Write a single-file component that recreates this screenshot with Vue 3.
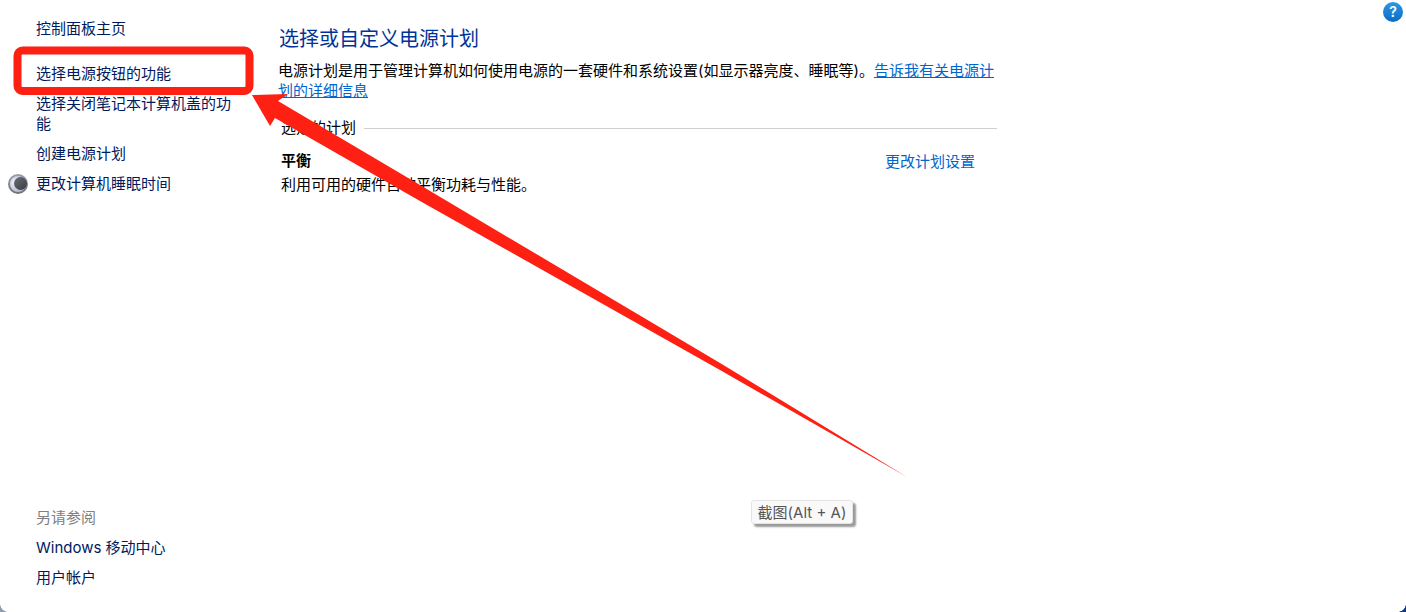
<template>
  <div class="window">
    <aside class="sidebar">
      <nav class="tasks">
        <a class="task home">控制面板主页</a>
        <a v-for="task in tasks" :key="task" class="task">{{ task }}</a>
        <a class="task with-icon">
          <svg class="moon" width="22" height="22" viewBox="0 0 22 22">
            <defs>
              <linearGradient id="moonRing" x1="0" y1="0" x2="0" y2="1">
                <stop offset="0" stop-color="#9a9fa8" />
                <stop offset="1" stop-color="#6c727b" />
              </linearGradient>
              <radialGradient id="moonBall" cx="0.3" cy="0.4" r="0.7">
                <stop offset="0" stop-color="#f2f4fa" />
                <stop offset="1" stop-color="#aab3c6" />
              </radialGradient>
              <linearGradient id="moonCore" x1="0" y1="0" x2="1" y2="1">
                <stop offset="0" stop-color="#6a6d73" />
                <stop offset="1" stop-color="#3a3c41" />
              </linearGradient>
            </defs>
            <circle cx="11" cy="11" r="10" fill="url(#moonRing)" />
            <circle cx="11" cy="11" r="8" fill="url(#moonBall)" />
            <circle cx="13.500" cy="10.500" r="6.500" fill="url(#moonCore)" />
          </svg>
          更改计算机睡眠时间
        </a>
      </nav>
      <div class="see-also">
        <div class="see-also-title">另请参阅</div>
        <a class="task">Windows 移动中心</a>
        <a class="task">用户帐户</a>
      </div>
    </aside>

    <main class="content">
      <h1 class="title">选择或自定义电源计划</h1>
      <p class="intro">
        电源计划是用于管理计算机如何使用电源的一套硬件和系统设置(如显示器亮度、睡眠等)。<a class="link">告诉我有关电源计划的详细信息</a>
      </p>
      <div class="group-head">
        <span>选定的计划</span>
        <div class="group-line"></div>
      </div>
      <div class="plan">
        <div class="plan-text">
          <div class="plan-name">平衡</div>
          <div class="plan-desc">利用可用的硬件自动平衡功耗与性能。</div>
        </div>
        <a class="plan-link">更改计划设置</a>
      </div>
    </main>

    <div class="help">?</div>

    <svg class="marks" width="1406" height="612" viewBox="0 0 1406 612">
      <rect x="17.500" y="50.500" width="232" height="40.500" rx="5" fill="none" stroke="#fd2013" stroke-width="8" />
      <polygon points="252,95 288,94 278,101 420,185 720,363 907,477 720,370 420,201 275,118 270,126" fill="#fd2013" />
    </svg>

    <div class="tip">截图(Alt + A)</div>
    <div class="corner left"></div>
    <div class="corner right"></div>
  </div>
</template>

<script setup>
  const tasks = [
    '选择电源按钮的功能',
    '选择关闭笔记本计算机盖的功能',
    '创建电源计划',
  ];
</script>

<style>
  html, body {
    margin: 0;
    background: #fff;
    overflow: hidden;
  }
</style>

<style scoped>
  .window {
    position: relative;
    display: flex;
    width: 1406px;
    height: 612px;
    overflow: hidden;
    background: #fff;
    color: #000;
    font-family: Inter, "Noto Sans CJK SC", sans-serif;
    font-size: 15px;
    line-height: 20px;
  }
  .sidebar {
    display: flex;
    flex-direction: column;
    justify-content: space-between;
    flex: 0 0 244px;
    box-sizing: border-box;
    padding: 19px 12px 24px 36px;
  }
  .task {
    display: block;
    margin-bottom: 10px;
    color: #001a60;
  }
  .see-also .task:last-child {
    margin-bottom: 0;
  }
  .home {
    margin-bottom: 25px;
  }
  .with-icon {
    position: relative;
    margin-bottom: 0;
  }
  .moon {
    position: absolute;
    left: -29px;
    top: -1px;
  }
  .see-also-title {
    margin-bottom: 10px;
    color: #808080;
  }
  .content {
    width: 719px;
    margin-left: 34px;
    padding-top: 24px;
  }
  .title {
    margin: 1px 0 0 1px;
    color: #003399;
    font-size: 20px;
    font-weight: 400;
    line-height: 28px;
  }
  .intro {
    margin: 8px 0 0;
  }
  .link {
    color: #0066cc;
    text-decoration: underline;
  }
  .group-head {
    display: flex;
    align-items: center;
    gap: 8px;
    margin: 17px 0 0 3px;
  }
  .group-line {
    flex: 1;
    border-top: 1px solid #cfcfcf;
  }
  .plan {
    display: flex;
    justify-content: space-between;
    margin: 13px 22px 0 3px;
  }
  .plan-name {
    font-weight: 700;
  }
  .plan-desc {
    margin-top: 4px;
  }
  .plan-link {
    margin-top: 1px;
    color: #0066cc;
  }
  .help {
    position: absolute;
    top: 2px;
    left: 1383px;
    width: 20px;
    height: 20px;
    border-radius: 50%;
    background: linear-gradient(#2c97e8, #0a6cc4);
    color: #fff;
    font-size: 14px;
    font-weight: 600;
    line-height: 20px;
    text-align: center;
  }
  .marks {
    position: absolute;
    top: 0;
    left: 0;
  }
  .tip {
    position: absolute;
    top: 500px;
    left: 751px;
    box-sizing: border-box;
    width: 102px;
    height: 24px;
    border: 1px solid #e4e4e4;
    border-radius: 3px;
    background: #f9f9f9;
    box-shadow: 3px 3px 2px #9a9a9a;
    color: #555;
    font-size: 15px;
    line-height: 23px;
    text-align: center;
    white-space: nowrap;
  }
  .corner {
    position: absolute;
    bottom: 0;
    width: 8px;
    height: 8px;
  }
  .corner.left {
    left: 0;
    background: radial-gradient(circle at 100% 0, transparent 7.5px, #8f9cb0 8px);
  }
  .corner.right {
    right: 0;
    background: radial-gradient(circle at 0 0, transparent 7.5px, #123a80 8px);
  }
</style>
